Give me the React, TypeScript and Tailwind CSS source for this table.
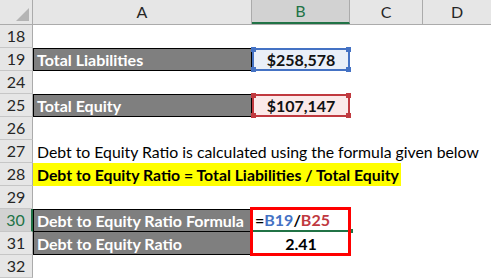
import React from 'react';

const font = { fontFamily: 'Lato, "Liberation Sans", sans-serif' };

const RowNum: React.FC<{ n: number; active?: boolean }> = ({ n, active }) => (
  <div
    className={`w-[33px] h-full shrink-0 flex items-center justify-center border-b border-r text-[16px] ${
      active
        ? 'bg-[#d2d2d2] text-[#217346] border-b-[#c6c6c6] border-r-[#217346] border-r-2'
        : 'bg-[#e6e6e6] text-[#262626] border-b-[#c6c6c6] border-r-[#ababab]'
    }`}
  >
    {n}
  </div>
);

const Handles: React.FC<{ color: string }> = ({ color }) => (
  <>
    <span className={`absolute -left-[3px] -top-[3px] w-[5px] h-[5px] ${color}`} />
    <span className={`absolute -right-[3px] -top-[3px] w-[5px] h-[5px] ${color}`} />
    <span className={`absolute -left-[3px] -bottom-[3px] w-[5px] h-[5px] ${color}`} />
    <span className={`absolute -right-[3px] -bottom-[3px] w-[5px] h-[5px] ${color}`} />
  </>
);

const DarkCell: React.FC<{ children: React.ReactNode; noTop?: boolean }> = ({ children, noTop }) => (
  <div
    className={`w-[219px] h-full shrink-0 bg-[#7f7f7f] border border-black ${
      noTop ? 'border-t-0' : ''
    } text-white font-bold text-[16px] flex items-center pl-[3px] pt-[1px] whitespace-nowrap`}
  >
    {children}
  </div>
);

export default function App() {
  return (
    <div className="w-[491px] h-[278px] bg-white overflow-hidden relative" style={font}>
      {/* column headers */}
      <div className="flex h-[25px] bg-[#e6e6e6] border-b border-[#ababab] text-[16px] text-[#262626]">
        <div className="w-[33px] shrink-0 relative border-r border-[#ababab]">
          <div className="absolute right-[3px] bottom-[3px] w-0 h-0 border-l-[13px] border-l-transparent border-b-[13px] border-b-[#b4b4b4]" />
        </div>
        <div className="w-[219px] shrink-0 flex items-center justify-center border-r border-[#ababab]">A</div>
        <div className="w-[98px] shrink-0 flex items-center justify-center bg-[#d2d2d2] border-r border-[#ababab] border-b-2 border-b-[#217346] text-[#217346]">
          B
        </div>
        <div className="w-[73px] shrink-0 flex items-center justify-center border-r border-[#ababab]">C</div>
        <div className="flex-1 flex items-center justify-center">D</div>
      </div>

      {/* row 18 */}
      <div className="flex h-[23px]">
        <RowNum n={18} />
      </div>

      {/* row 19 */}
      <div className="flex h-[23px]">
        <RowNum n={19} />
        <DarkCell>Total Liabilities</DarkCell>
        <div className="relative w-[98px] h-full shrink-0 bg-[#e9eff8] border-2 border-[#4472c4] flex items-center justify-center pt-[1px] font-bold text-[16px] text-[#111]">
          $258,578
          <Handles color="bg-[#4472c4]" />
        </div>
      </div>

      {/* row 24 */}
      <div className="flex h-[23px]">
        <RowNum n={24} />
      </div>

      {/* row 25 */}
      <div className="flex h-[23px]">
        <RowNum n={25} />
        <DarkCell>Total Equity</DarkCell>
        <div className="relative w-[98px] h-full shrink-0 bg-[#fbe9e9] border-2 border-[#c0393f] flex items-center justify-center pt-[1px] font-bold text-[16px] text-[#111]">
          $107,147
          <Handles color="bg-[#c0393f]" />
        </div>
      </div>

      {/* row 26 */}
      <div className="flex h-[23px]">
        <RowNum n={26} />
      </div>

      {/* row 27 */}
      <div className="flex h-[23px]">
        <RowNum n={27} />
        <div className="flex items-center pl-[4px] pt-[1px] text-[15.8px] text-black whitespace-nowrap">
          Debt to Equity Ratio is calculated using the formula given below
        </div>
      </div>

      {/* row 28 */}
      <div className="flex h-[23px]">
        <RowNum n={28} />
        <div className="w-[368px] h-full bg-[#ffff00] flex items-center pl-[4px] pt-[1px] text-[15.8px] font-bold text-black whitespace-nowrap">
          Debt to Equity Ratio = Total Liabilities / Total Equity
        </div>
      </div>

      {/* row 29 */}
      <div className="flex h-[23px]">
        <RowNum n={29} />
      </div>

      {/* rows 30 - 31 */}
      <div className="relative">
        <div className="flex h-[23px]">
          <RowNum n={30} active />
          <DarkCell>Debt to Equity Ratio Formula</DarkCell>
          <div className="relative w-[98px] h-full shrink-0 flex items-center pl-[3px] pt-[1px] font-bold text-[16px] border-b-2 border-[#217346]">
            <span className="text-black">=</span>
            <span className="text-[#4472c4]">B19</span>
            <span className="text-black">/</span>
            <span className="text-[#c0393f]">B25</span>
            <span className="absolute -right-[3px] -bottom-[3px] w-[4px] h-[4px] bg-[#217346]" />
          </div>
        </div>
        <div className="flex h-[23px]">
          <RowNum n={31} />
          <DarkCell noTop>Debt to Equity Ratio</DarkCell>
          <div className="w-[98px] h-full shrink-0 flex items-center justify-center pt-[1px] font-bold text-[16px] text-black">
            2.41
          </div>
        </div>
        <div className="absolute left-[250px] top-[-2px] w-[101px] h-[49px] border-[3px] border-[#ff0000]" />
      </div>

      {/* row 32 */}
      <div className="flex h-[23px]">
        <RowNum n={32} />
      </div>
    </div>
  );
}
